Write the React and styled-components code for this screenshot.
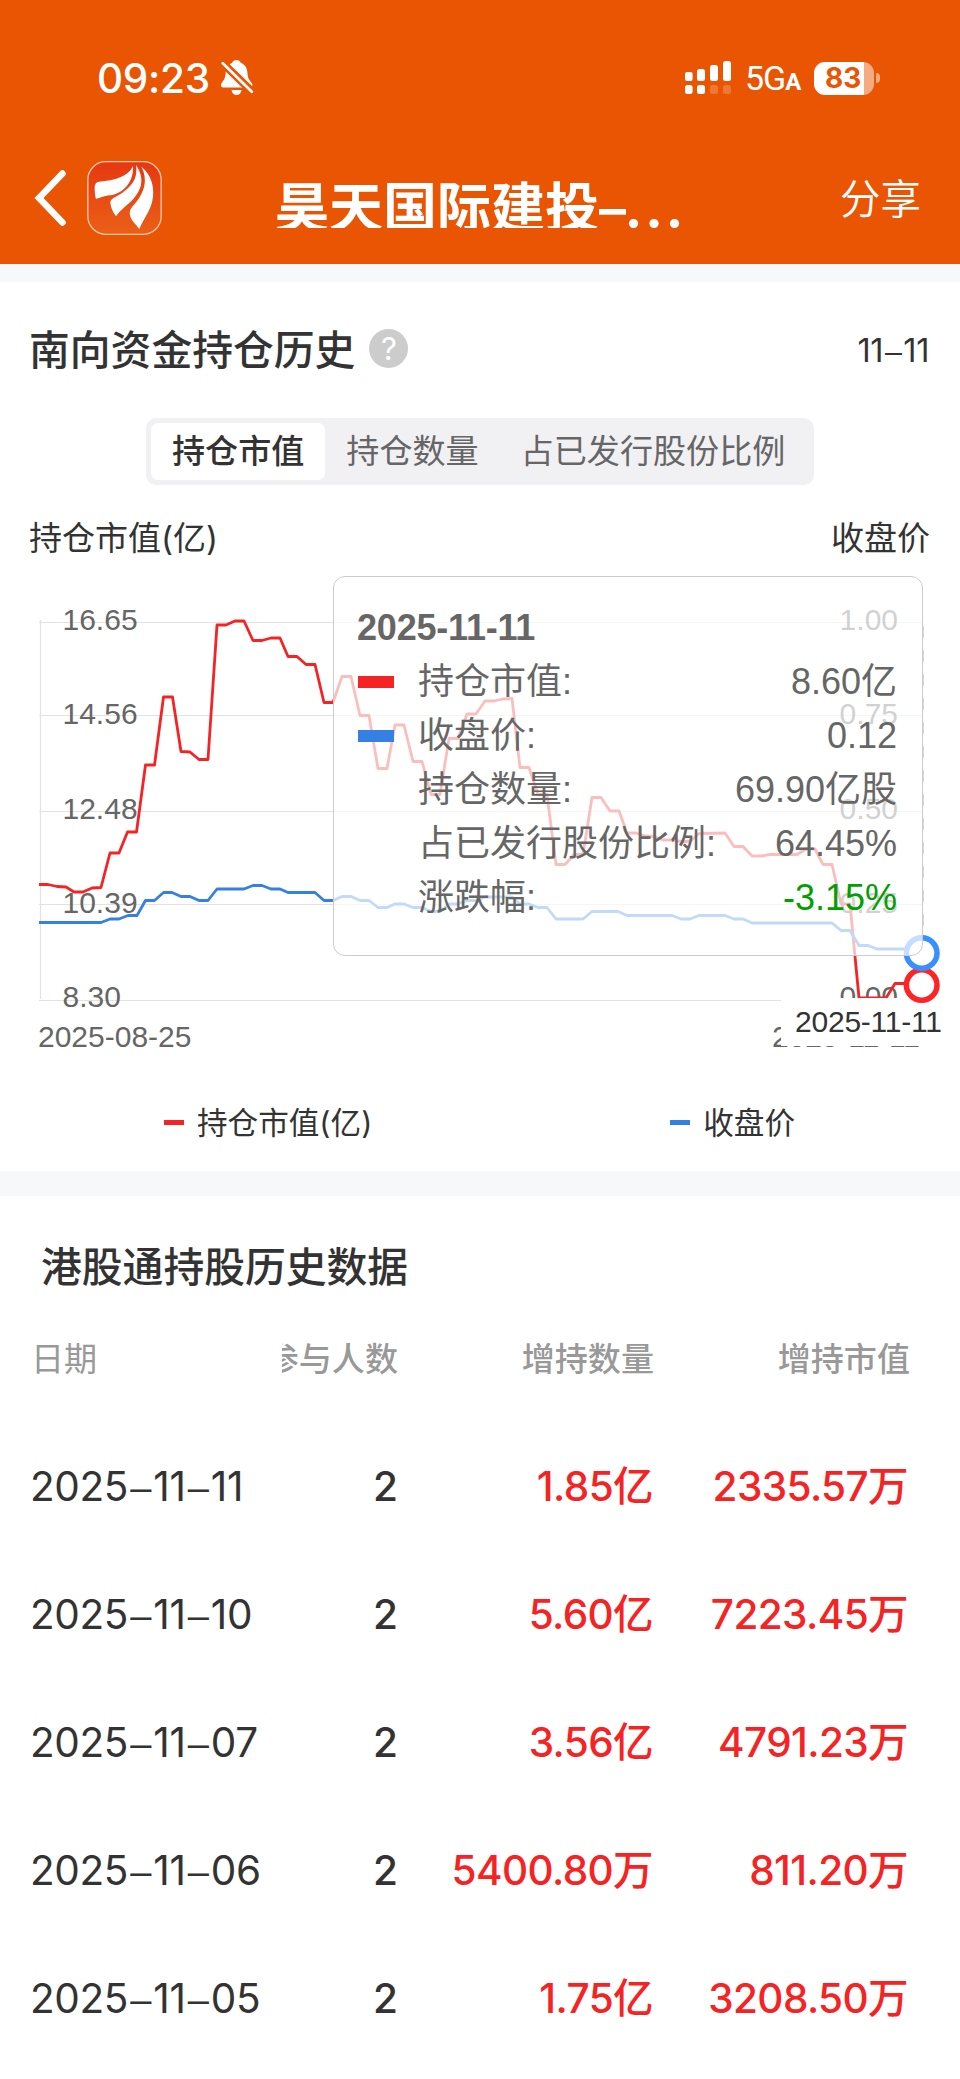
import React from "react";
import styled, { createGlobalStyle } from "styled-components";

const tabs = ["持仓市值", "持仓数量", "占已发行股份比例"];

const axis = [
  { left: "16.65", right: "1.00", line: 622.5, base: 630 },
  { left: "14.56", right: "0.75", line: 715.5, base: 724 },
  { left: "12.48", right: "0.50", line: 811.5, base: 818.5 },
  { left: "10.39", right: "0.25", line: 904.5, base: 912.5 },
  { left: "8.30", right: "0.00", line: 1000.5, base: 1007 },
];

const tooltipRows = [
  { mark: "#f52323", label: "持仓市值:", value: "8.60亿" },
  { mark: "#3480e3", label: "收盘价:", value: "0.12" },
  { label: "持仓数量:", value: "69.90亿股" },
  { label: "占已发行股份比例:", value: "64.45%" },
  { label: "涨跌幅:", value: "-3.15%", down: true },
];

const history = [
  { date: "2025–11–11", count: 2, amount: "1.85亿", value: "2335.57万" },
  { date: "2025–11–10", count: 2, amount: "5.60亿", value: "7223.45万" },
  { date: "2025–11–07", count: 2, amount: "3.56亿", value: "4791.23万" },
  { date: "2025–11–06", count: 2, amount: "5400.80万", value: "811.20万" },
  { date: "2025–11–05", count: 2, amount: "1.75亿", value: "3208.50万" },
];

const marketLine =
  "39,884.5 48,884.5 57,886.5 66,887 74,892 83,892 92,888 101,887.5 110,853 119,853 127.5,832 136.5,832 145.5,765 154.5,765 163.5,697 172.5,697 181,751.5 190,752 199,759.5 208,759.5 217,625 226,625 235,621 244,621 253,640.5 262,640.5 271,638 280,638 288,656.5 297,656.5 306,664.5 315,664.5 324,702.5 333,702.5 342,676.5 351,676.5 360,715.5 369,715.5 378,768.5 387,768.5 395,725 404,725 413,761.5 422,761.5 431,794.5 440,794.5 449,738.5 458,738.5 467,714 476,714 485,701 494,701 503,699 512,698.5 520,767.5 529,767.5 538,794.5 547,794.5 556,864.5 565,864.5 574,854.5 583,854.5 592,797.5 601,797.5 610,811 619,811 627,833 636,833 645,836 654,836.5 663,840 672,840 681,841.5 690,841.5 699,833.5 725,833 734,846.5 743,846.5 752,856 761,856 770,854.5 797,854.5 806,849 815,849 823,864.5 832,864.5 841,904 850,904 859,998 886,998 895,983.5 921,983.5";

const priceLine =
  "39,922.5 101,922.5 110,919 119,919 128,915.5 137,915.5 145.5,900.5 154.5,900.5 163.5,892.5 172,892.5 181,896.5 190,896.5 199,900.5 208,900.5 217,889 244,889 253,885.5 262,885.5 271,889 280,889 288,892.5 315,892.5 324,900.5 333,900.5 342,896.5 351,896.5 360,900.5 369,900.5 378,907.5 387,907.5 395,904 404,904 413,907.5 422,907.5 431,911.5 440,911.5 449,904 458,904 467,900.5 476,900.5 485,897 512,897 520,904 529,904 538,907.5 547,907.5 556,919 583,919 592,911.5 618,911.5 627,915.5 672,915.5 681,919 690,919 699,915.5 725,915.5 734,919 743,919 752,923 832,923 841,930.5 850,930.5 859,945.5 868,945.5 877,949 921,949";

const BellOff = () => (
  <svg width="33" height="36" viewBox="0 0 33 36">
    <path
      d="M15.5 0c2.2 0 3.600 1 4.200 2.800 4.500 1.700 6.600 5.600 6.800 10.700.2 5.500 2.500 7 4.300 9.600 1.200 2 .5 4.400-2 4.400H2.300c-2.500 0-3-2.600-1.600-4.600 1.900-2.400 3.600-4.400 3.900-9.400.3-5.100 2.300-9 6.700-10.700C12 1 13.300 0 15.500 0z"
      fill="#fff"
    />
    <path d="M10.500 30h10c-.4 3-2.400 5-5 5s-4.600-2-5-5z" fill="#fff" />
    <path d="M0 1.500L33 33.500" stroke="#ea5504" strokeWidth="8" />
    <path d="M1.800 3.300L30.800 31.800" stroke="#fff" strokeWidth="2.700" strokeLinecap="round" />
  </svg>
);

const Signal = () => (
  <svg width="47" height="34" viewBox="0 0 47 34" fill="#fff">
    <rect x="0" y="11" width="7.600" height="9" rx="2" />
    <rect x="12" y="8" width="8" height="12" rx="2.500" />
    <rect x="25" y="4" width="8" height="16" rx="2.500" />
    <rect x="38" y="0" width="8" height="20" rx="2.500" />
    <rect x="0" y="24" width="7.600" height="9" rx="2.500" />
    <rect x="12" y="24" width="8" height="9" rx="2.500" />
    <rect x="25" y="24" width="8" height="9" rx="2.500" opacity=".2" />
    <rect x="38" y="24" width="8" height="9" rx="2.500" opacity=".2" />
  </svg>
);

const Logo = () => (
  <svg width="75" height="74" viewBox="261 483 225 222">
    <defs>
      <linearGradient id="logoBg" x1="0" y1="0" x2="0" y2="1">
        <stop offset="0" stopColor="#e63812" />
        <stop offset="1" stopColor="#ea6016" />
      </linearGradient>
    </defs>
    <rect x="263.500" y="485" width="220" height="218" rx="54" fill="url(#logoBg)" stroke="#fbc9ad" strokeWidth="4" />
    <g fill="#fff">
      <path d="M284 562Q284 547 297 545C345 541 385 530 399 498C402 545 370 581 330 586C310 588 299 594 288 597Q284 585 284 562z" />
      <path d="M408 495C426 520 430 550 415 575C396 610 367 620 348 649C340 637 331 622 331 605C335 592 350 592 375 572C402 550 413 530 408 495z" />
      <path d="M424 500C455 525 462 560 459 590C455 630 430 655 418 687C407 671 390 660 389 638C390 620 412 610 425 580C438 555 438 525 424 500z" />
    </g>
  </svg>
);

// the dashes in dates are wider than the ones Inter has
const DateText = ({ value }) =>
  value.split("–").map((part, i) => (
    <React.Fragment key={i}>
      {i > 0 && <DateDash>–</DateDash>}
      {part}
    </React.Fragment>
  ));

const Chart = () => (
  <ChartSvg width="960" height="502" viewBox="0 558 960 502">
    {axis.map((item) => (
      <line key={item.line} x1="39" x2="922" y1={item.line} y2={item.line} stroke="#e2e2e2" strokeWidth="1.200" />
    ))}
    <line x1="40.500" x2="40.500" y1="620" y2="999" stroke="#e2e2e2" strokeWidth="1.200" />
    <g fill="#666" fontSize="30">
      {axis.map((item) => (
        <React.Fragment key={item.left}>
          <text x="62.500" y={item.base}>
            {item.left}
          </text>
          <text x="898" y={item.base} textAnchor="end">
            {item.right}
          </text>
        </React.Fragment>
      ))}
      <text x="38" y="1047">2025-08-25</text>
      <text x="772" y="1047" textLength="148">
        2025-11-11
      </text>
    </g>
    <polyline points={marketLine} fill="none" stroke="#f52323" strokeWidth="2.800" strokeLinejoin="round" />
    <polyline points={priceLine} fill="none" stroke="#3480e3" strokeWidth="2.800" strokeLinejoin="round" />
    <line x1="923" x2="923" y1="626" y2="936" stroke="#ccc" strokeWidth="1.500" strokeDasharray="12 12" />
    <rect x="781" y="998" width="175" height="48" fill="#fff" />
    <text x="795" y="1032" fontSize="30" fill="#333" textLength="147">
      2025-11-11
    </text>
    <circle cx="921.700" cy="985" r="15.300" fill="#fff" stroke="#ff2424" strokeWidth="5.500" />
    <circle cx="921.700" cy="953" r="15.300" fill="#fff" stroke="#3a8fff" strokeWidth="5.500" />
  </ChartSvg>
);

const App = () => {
  return (
    <Page>
      <GlobalStyle />
      <Header>
        <StatusBar>
          <Time>09:23</Time>
          <BellOff />
          <StatusRight>
            <Signal />
            <Network>
              5G<small>A</small>
            </Network>
            <Battery>
              <BatteryLevel>83</BatteryLevel>
            </Battery>
            <BatteryCap />
          </StatusRight>
        </StatusBar>
        <NavBar>
          <NavLeft>
            <svg width="34" height="56" viewBox="0 0 34 56">
              <path d="M28.500 3.500L5 28l23.500 24.500" fill="none" stroke="#fff" strokeWidth="6.500" strokeLinecap="round" />
            </svg>
            <Logo />
          </NavLeft>
          <NavTitle>
            昊天国际建投<Dash>–</Dash>
            <Dots>...</Dots>
          </NavTitle>
          <Share>分享</Share>
        </NavBar>
      </Header>

      <Section>
        <TitleRow>
          <Title>南向资金持仓历史</Title>
          <Help>?</Help>
          <UpdateDate>
            <DateText value="11–11" />
          </UpdateDate>
        </TitleRow>
        <Tabs>
          {tabs.map((tab, i) => (
            <Tab key={tab} $active={i === 0}>
              {tab}
            </Tab>
          ))}
        </Tabs>
        <AxisTitles>
          <span>持仓市值(亿)</span>
          <span>收盘价</span>
        </AxisTitles>
        <ChartWrap>
          <Chart />
          <Tooltip>
            <TooltipTitle>2025-11-11</TooltipTitle>
            {tooltipRows.map((row) => (
              <TooltipRow key={row.label}>
                <TooltipMark $color={row.mark} />
                <span>{row.label}</span>
                <TooltipValue $down={row.down}>{row.value}</TooltipValue>
              </TooltipRow>
            ))}
          </Tooltip>
        </ChartWrap>
        <Legend>
          <LegendItem $color="#f52323">持仓市值(亿)</LegendItem>
          <LegendItem $color="#3480e3">收盘价</LegendItem>
        </Legend>
      </Section>

      <Section>
        <TableTitle>港股通持股历史数据</TableTitle>
        <TableHead>
          <HeadCell $first>日期</HeadCell>
          <HeadCell>参与人数</HeadCell>
          <HeadCell>增持数量</HeadCell>
          <HeadCell>增持市值</HeadCell>
        </TableHead>
        {history.map((row) => (
          <TableRow key={row.date}>
            <DateCell>
              <DateText value={row.date} />
            </DateCell>
            <Cell>{row.count}</Cell>
            <Cell $up>{row.amount}</Cell>
            <Cell $up>{row.value}</Cell>
          </TableRow>
        ))}
      </Section>
    </Page>
  );
};

const GlobalStyle = createGlobalStyle`
  body {
    margin: 0;
    background: #f7f8fa;
  }
  * {
    box-sizing: border-box;
  }
  svg {
    display: block;
    flex-shrink: 0;
  }
`;

const Page = styled.div`
  width: 960px;
  height: 2079px;
  overflow: hidden;
  display: flex;
  flex-direction: column;
  color: #333;
  font-family: Inter, "Noto Sans CJK SC", sans-serif;
  white-space: nowrap;
`;
const Header = styled.header`
  height: 264px;
  background: #ea5504;
  color: #fff;
  flex-shrink: 0;
  margin-bottom: 18px;
`;
const StatusBar = styled.div`
  height: 132px;
  padding: 24px 80px 0 97px;
  display: flex;
  align-items: center;
`;
const Time = styled.div`
  width: 124px;
  font-size: 40.5px;
  font-weight: 550;
  letter-spacing: -0.3px;
`;
const StatusRight = styled.div`
  margin-left: auto;
  display: flex;
  align-items: center;
`;
const Network = styled.div`
  width: 67px;
  margin-left: 13px;
  font-family: Roboto, sans-serif;
  font-size: 34px;
  font-weight: 400;
  line-height: 34px;
  letter-spacing: -1px;
  padding-top: 4px;
  small {
    font-size: 24px;
    font-weight: 700;
  }
`;
const Battery = styled.div`
  width: 60px;
  height: 33px;
  margin-left: 2px;
  border-radius: 11px;
  background: linear-gradient(to right, #fff 50px, #f5ab82 50px);
`;
const BatteryLevel = styled.div`
  padding-left: 11px;
  color: #ea5504;
  font-size: 28px;
  font-weight: 700;
  line-height: 33px;
`;
const BatteryCap = styled.div`
  width: 4px;
  height: 10px;
  margin-left: 2px;
  border-radius: 0 5px 5px 0;
  background: #f5ab82;
`;
const NavBar = styled.div`
  height: 132px;
  padding: 0 39px 0 34px;
  display: grid;
  grid-template-columns: 200px 1fr 200px;
  align-items: center;
`;
const NavLeft = styled.div`
  display: flex;
  align-items: center;
  gap: 19px;
`;
const NavTitle = styled.div`
  height: 60px;
  margin-left: 6px;
  overflow: hidden;
  text-align: center;
  font-size: 54px;
  line-height: 82px;
  font-weight: 700;
`;
const Dash = styled.span`
  font-weight: 600;
  letter-spacing: -1.5px;
`;
const Dots = styled.span`
  letter-spacing: 2.5px;
`;
const Share = styled.div`
  margin-bottom: 4px;
  text-align: right;
  font-size: 40.5px;
  font-weight: 350;
`;
const Section = styled.section`
  background: #fff;
  flex-shrink: 0;
  margin-bottom: 25px;
  &:last-child {
    flex: 1;
    margin-bottom: 0;
  }
`;
const TitleRow = styled.div`
  height: 136px;
  padding: 0 31px 0 29px;
  display: flex;
  align-items: center;
`;
const Title = styled.h2`
  margin: 0 0 5px;
  font-size: 40.8px;
  font-weight: 500;
`;
const Help = styled.div`
  width: 39px;
  height: 39px;
  margin: 0 0 4px 14px;
  border-radius: 50%;
  background: #ccc;
  color: #fff;
  text-align: center;
  font-size: 31px;
  font-weight: 400;
  line-height: 39px;
`;
const UpdateDate = styled.div`
  margin-left: auto;
  font-size: 32.5px;
  letter-spacing: -0.4px;
`;
const DateDash = styled.span`
  margin: 0 0.06em;
  font-family: "Liberation Sans", sans-serif;
  font-size: 0.94em;
`;
const Tabs = styled.div`
  width: 668px;
  height: 67px;
  margin: 0 auto;
  padding: 5px;
  display: flex;
  border-radius: 10px;
  background: #f1f1f4;
`;
const Tab = styled.div`
  padding: 0 21px;
  border-radius: 7px;
  background: ${(p) => (p.$active ? "#fff" : "transparent")};
  color: ${(p) => (p.$active ? "#333" : "#666")};
  font-size: 33.1px;
  font-weight: ${(p) => (p.$active ? 500 : 400)};
  line-height: 57px;
`;
const AxisTitles = styled.div`
  height: 73px;
  padding: 16px 30px 0 29px;
  display: flex;
  justify-content: space-between;
  font-size: 33px;
  line-height: 74px;
`;
const ChartWrap = styled.div`
  position: relative;
  height: 502px;
`;
const ChartSvg = styled.svg`
  font-family: "Liberation Sans", sans-serif;
`;
const Tooltip = styled.div`
  position: absolute;
  left: 333px;
  top: 18px;
  width: 590px;
  height: 380px;
  padding: 24px 25px 0 24px;
  border: 1px solid #ccc;
  border-radius: 12px;
  background: rgba(255, 255, 255, 0.7);
  color: #666;
  font-family: "Liberation Sans", "Noto Sans CJK SC", sans-serif;
  font-size: 36px;
`;
const TooltipTitle = styled.div`
  height: 54px;
  margin-left: -1px;
  font-weight: 700;
  line-height: 54px;
  letter-spacing: -0.2px;
`;
const TooltipRow = styled.div`
  height: 54px;
  display: flex;
  align-items: center;
  line-height: 56px;
`;
const TooltipMark = styled.i`
  width: 36px;
  height: 12px;
  margin-right: 24px;
  background: ${(p) => p.$color || "transparent"};
`;
const TooltipValue = styled.span`
  margin-left: auto;
  color: ${(p) => (p.$down ? "#00a000" : "inherit")};
`;
const Legend = styled.div`
  height: 111px;
  padding: 0 165px 0 164px;
  display: flex;
  justify-content: space-between;
  font-size: 30.6px;
  line-height: 126px;
`;
const LegendItem = styled.div`
  display: flex;
  align-items: center;
  height: 126px;
  &::before {
    content: "";
    width: 20px;
    height: 5px;
    margin: 0 13px 1px 0;
    background: ${(p) => p.$color};
  }
`;
const TableTitle = styled.h2`
  height: 112px;
  margin: 0;
  padding: 28px 0 0 41px;
  font-size: 40.8px;
  font-weight: 500;
  line-height: 86px;
`;
const TableHead = styled.div`
  height: 115px;
  padding-left: 31px;
  display: grid;
  grid-template-columns: 251px 116px 256px 256px;
  color: #999;
  font-size: 33.1px;
  line-height: 103px;
`;
const HeadCell = styled.div`
  display: flex;
  justify-content: ${(p) => (p.$first ? "flex-start" : "flex-end")};
  overflow: hidden;
  font-weight: ${(p) => (p.$first ? 400 : 500)};
`;
const TableRow = styled.div`
  height: 128px;
  padding-left: 30px;
  display: grid;
  grid-template-columns: 252px 116px 256px 255px;
  font-size: 40.5px;
  line-height: 128px;
`;
const DateCell = styled.div`
  letter-spacing: -0.4px;
`;
const Cell = styled.div`
  text-align: right;
  font-weight: 500;
  letter-spacing: ${(p) => (p.$up ? "-0.6px" : "0")};
  padding-right: ${(p) => (p.$up ? "1px" : "0")};
  color: ${(p) => (p.$up ? "#f52323" : "inherit")};
`;

export default App;
